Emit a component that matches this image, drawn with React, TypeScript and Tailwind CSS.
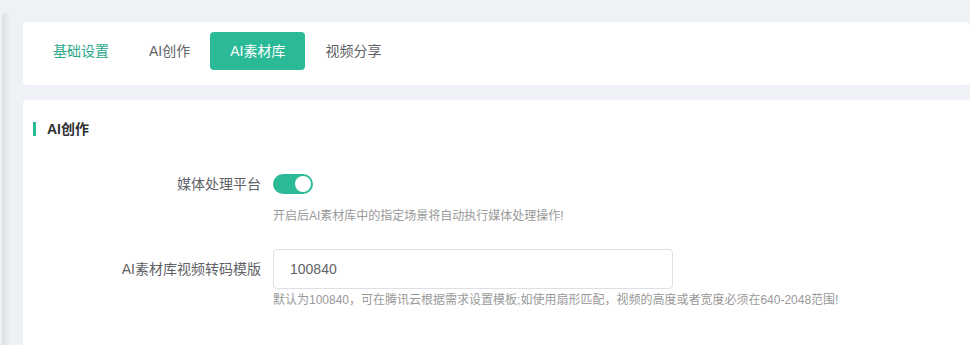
export default function App() {
    const tabs = ["基础设置", "AI创作", "AI素材库", "视频分享"];
    const active = 2;

    return (
        <div
            className="relative min-h-[345px] w-[970px] overflow-hidden bg-[#eef1f5] pl-[23px] pt-[22px]"
            style={{ fontFamily: '"Liberation Sans", "Noto Sans CJK SC", sans-serif' }}
        >
            {/* left sidebar shadow */}
            <div className="absolute left-[2px] top-[12px] bottom-0 w-[8px] rounded-tl-[6px] bg-gradient-to-r from-[#dcdfe4] to-[#eef1f5]"></div>

            {/* Tabs card */}
            <div className="flex h-[63px] items-start rounded-[4px] bg-white pl-[10px] pt-[10px]">
                {tabs.map((t, i) => (
                    <div
                        key={t}
                        className={
                            i === active
                                ? "flex h-[38px] items-center rounded-[4px] bg-[#2bba98] px-5 text-[14px] text-white"
                                : i === 0
                                  ? "flex h-[38px] items-center px-5 text-[14px] text-[#2aa98b]"
                                  : "flex h-[38px] items-center px-5 text-[14px] text-[#606266]"
                        }
                    >
                        {t}
                    </div>
                ))}
            </div>

            {/* Settings card */}
            <div className="mt-[15px] h-[260px] rounded-tl-[4px] bg-white pt-[19px]">
                <div className="flex items-center pl-[10px]">
                    <div className="h-[14px] w-[3px] bg-[#2bba98]"></div>
                    <div className="ml-[11px] text-[14px] font-bold leading-5 text-[#303133]">AI创作</div>
                </div>

                {/* Row 1 */}
                <div className="mt-[25px] flex">
                    <div className="w-[250px] pr-3 text-right text-[14px] leading-10 text-[#606266]">媒体处理平台</div>
                    <div className="flex flex-col">
                        <div className="flex h-10 items-center">
                            <div className="relative h-[20px] w-[40px] rounded-full bg-[#2bba98]">
                                <div className="absolute right-[2px] top-[2px] h-[16px] w-[16px] rounded-full bg-white"></div>
                            </div>
                        </div>
                        <div className="mt-[3px] text-[12px] leading-[18px] text-[#999]">开启后AI素材库中的指定场景将自动执行媒体处理操作!</div>
                    </div>
                </div>

                {/* Row 2 */}
                <div className="mt-[24px] flex">
                    <div className="w-[250px] pr-3 text-right text-[14px] leading-10 text-[#606266]">AI素材库视频转码模版</div>
                    <div className="flex flex-col">
                        <div className="flex h-10 w-[400px] items-center rounded-[4px] border border-[#dcdfe6] px-4 text-[14px] text-[#606266]">
                            100840
                        </div>
                        <div className="mt-[2px] text-[12px] leading-[18px] text-[#999]">
                            默认为100840，可在腾讯云根据需求设置模板;如使用扇形匹配，视频的高度或者宽度必须在640-2048范围!
                        </div>
                    </div>
                </div>
            </div>
        </div>
    );
}
